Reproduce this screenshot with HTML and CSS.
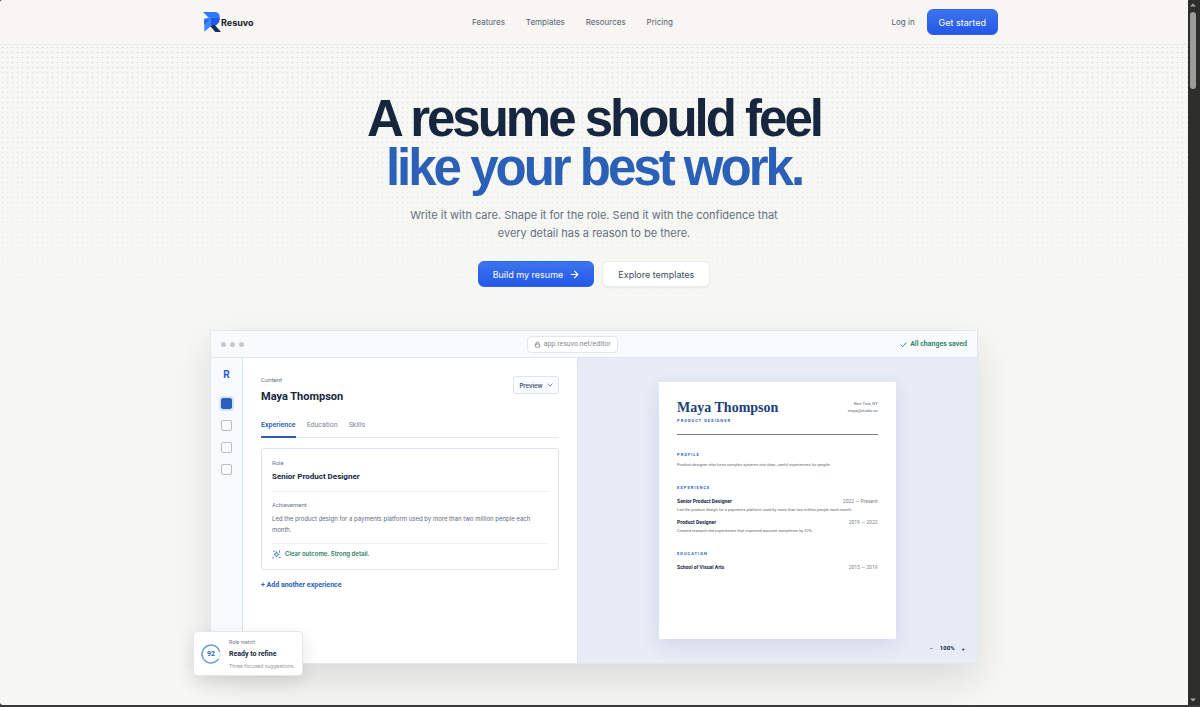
FILE: index.html
```html
<!DOCTYPE html>
<html lang="en">
<head>
    <meta charset="UTF-8">
    <meta name="viewport" content="width=device-width, initial-scale=1.0">
    <title>Resuvo</title>
    <link rel="stylesheet" href="styles.css">
</head>
<body>
    <div class="window">
        <div class="page">
            <header class="site-header">
                <div class="header-inner">
                    <a class="brand" href="#">
                        <svg class="brand-mark" viewBox="0 0 54 60" aria-hidden="true">
                            <path fill="#2f7bf6" d="M0 0h35c10 0 15 6 15 14v6H20z"/>
                            <path fill="#2457e8" d="M20 18h30v4c0 9-5 15-14 19l-14 3z"/>
                            <path fill="#3f86fa" d="M4 20l16-4 4 4v22L4 59z"/>
                            <path fill="#2563eb" d="M4 22l14 2L4 38z"/>
                            <path fill="#14305f" d="M22 43l13-5 19 22H37z"/>
                        </svg>
                        <span>Resuvo</span>
                    </a>
                    <nav class="nav">
                        <a href="#">Features</a>
                        <a href="#">Templates</a>
                        <a href="#">Resources</a>
                        <a href="#">Pricing</a>
                    </nav>
                    <div class="header-actions">
                        <a href="#">Log in</a>
                        <button class="btn btn-primary btn-small">Get started</button>
                    </div>
                </div>
            </header>

            <main class="hero">
                <h1>A resume should feel <span>like your best work.</span></h1>
                <p class="lead">Write it with care. Shape it for the role. Send it with the confidence that every detail has a reason to be there.</p>
                <div class="hero-actions">
                    <button class="btn btn-primary">Build my resume
                        <svg class="icon" viewBox="0 0 16 16" aria-hidden="true"><path d="M2 8h12M8 2l6 6-6 6"/></svg>
                    </button>
                    <button class="btn btn-light">Explore templates</button>
                </div>

                <div class="demo">
                    <div class="demo-bar">
                        <div class="dots"><i></i><i></i><i></i></div>
                        <div class="address">
                            <svg class="icon" viewBox="0 0 16 16" aria-hidden="true"><rect x="3" y="7" width="10" height="7" rx="1"/><path d="M5 7V5a3 3 0 0 1 6 0v2"/></svg>
                            app.resuvo.net/editor
                        </div>
                        <div class="saved">
                            <svg class="icon" viewBox="0 0 16 16" aria-hidden="true"><path d="M2 9l4 4 8-9"/></svg>
                            All changes saved
                        </div>
                    </div>

                    <div class="demo-body">
                        <aside class="rail">
                            <b>R</b>
                            <i class="active"></i>
                            <i></i>
                            <i></i>
                            <i></i>
                        </aside>

                        <section class="editor">
                            <div class="editor-head">
                                <div>
                                    <div class="label">Content</div>
                                    <h2>Maya Thompson</h2>
                                </div>
                                <button class="preview-btn">Preview
                                    <svg class="icon" viewBox="0 0 16 16" aria-hidden="true"><path d="M2 5l6 6 6-6"/></svg>
                                </button>
                            </div>
                            <div class="tabs">
                                <button class="tab active">Experience</button>
                                <button class="tab">Education</button>
                                <button class="tab">Skills</button>
                            </div>
                            <div class="card">
                                <div class="field">
                                    <div class="label">Role</div>
                                    <h3>Senior Product Designer</h3>
                                </div>
                                <div class="field">
                                    <div class="label">Achievement</div>
                                    <p>Led the product design for a payments platform used by more than two million people each month.</p>
                                </div>
                                <div class="hint">
                                    <svg class="icon" viewBox="0 0 24 24" aria-hidden="true"><path d="M12 5l2 5 5 2-5 2-2 5-2-5-5-2 5-2zM4 3h3M20 2v4M19 20h3M3 19v3"/></svg>
                                    Clear outcome. Strong detail.
                                </div>
                            </div>
                            <button class="add">+ Add another experience</button>
                        </section>

                        <section class="preview">
                            <article class="paper">
                                <div class="paper-head">
                                    <div>
                                        <h2>Maya Thompson</h2>
                                        <h4>PRODUCT DESIGNER</h4>
                                    </div>
                                    <p>New York, NY<br>maya@studio.co</p>
                                </div>
                                <h4>PROFILE</h4>
                                <p>Product designer who turns complex systems into clear, useful experiences for people.</p>
                                <h4>EXPERIENCE</h4>
                                <div class="job"><b>Senior Product Designer</b><span>2022 — Present</span></div>
                                <p>Led the product design for a payments platform used by more than two million people each month.</p>
                                <div class="job"><b>Product Designer</b><span>2019 — 2022</span></div>
                                <p>Created research-led experiences that improved account completion by 32%.</p>
                                <h4>EDUCATION</h4>
                                <div class="job"><b>School of Visual Arts</b><span>2015 — 2019</span></div>
                            </article>
                            <div class="zoom">
                                <button aria-label="Zoom out">−</button>
                                <b>100%</b>
                                <button aria-label="Zoom in">+</button>
                            </div>
                        </section>
                    </div>

                    <div class="match">
                        <div class="score">
                            <svg viewBox="0 0 40 40" aria-hidden="true"><circle cx="20" cy="20" r="18" stroke="#dce8f8"/><circle cx="20" cy="20" r="18" stroke="#6f9fe6" pathLength="100" stroke-dasharray="86 14" transform="rotate(35 20 20)"/></svg>
                            <b>92</b>
                        </div>
                        <div>
                            <div class="match-label">Role match</div>
                            <h3>Ready to refine</h3>
                            <div class="match-note">Three focused suggestions.</div>
                        </div>
                    </div>
                </div>
            </main>
        </div>

        <div class="scrollbar" aria-hidden="true">
            <svg viewBox="0 0 8 8"><path d="M0 6l4-4 4 4z"/></svg>
            <div class="thumb"></div>
            <svg viewBox="0 0 8 8"><path d="M0 2l4 4 4-4z"/></svg>
        </div>
    </div>
</body>
</html>
```
FILE: styles.css
```css
* {
    box-sizing: border-box;
}
body {
    margin: 0;
    background: #393939;
    color: #16263f;
    font-family: Inter, "Liberation Sans", sans-serif;
}
h1, h2, h3, h4, p {
    margin: 0;
}
a {
    color: inherit;
    text-decoration: none;
}
button {
    font-family: inherit;
    color: inherit;
    background: none;
    border: none;
    padding: 0;
    cursor: pointer;
}
.icon {
    width: 9px;
    height: 9px;
    fill: none;
    stroke: currentColor;
    stroke-width: 2;
    stroke-linecap: round;
    stroke-linejoin: round;
    flex: none;
}
.window {
    display: grid;
    grid-template-columns: minmax(0, 1fr) 12px;
    min-height: 100vh;
    padding-bottom: 3px;
}
.page {
    background: #f7f7f4;
    border-radius: 3px 0 0 3px;
    overflow: hidden;
}

/* header */
.site-header {
    background: #f7f6f3;
    border-bottom: 1px solid #ececea;
}
.header-inner {
    max-width: 808px;
    height: 44px;
    margin: 0 auto;
    display: flex;
    align-items: center;
    justify-content: space-between;
}
.brand {
    display: flex;
    align-items: center;
    padding-left: 13px;
    font-size: 9px;
    font-weight: 700;
    color: #17191f;
}
.brand-mark {
    width: 18px;
    height: 20px;
}
.nav {
    display: flex;
    gap: 21px;
    font-size: 8px;
    color: #565f70;
}
.header-actions {
    display: flex;
    align-items: center;
    gap: 12px;
    font-size: 8px;
    color: #565f70;
}
.btn {
    display: flex;
    align-items: center;
    gap: 7px;
    height: 26px;
    padding: 0 14px;
    border-radius: 6px;
    font-size: 9px;
}
.btn-primary {
    color: #fff;
    background: linear-gradient(#3b74ee, #2458e8);
    border: 1px solid #2f66e4;
}
.btn-small {
    padding: 0 11px;
}
.btn-light {
    color: #424b59;
    background: #fff;
    padding: 0 15px;
    border: 1px solid #ececec;
    box-shadow: 0 1px 2px rgba(0,0,0,0.06);
}

/* hero */
.hero {
    position: relative;
    padding: 49px 20px 41px;
    display: flex;
    flex-direction: column;
    align-items: center;
    text-align: center;
}
.hero::before {
    content: "";
    position: absolute;
    inset: 0 0 auto 0;
    height: 280px;
    background: radial-gradient(circle, #dcdddb 20%, transparent 30%) 0 0 / 5px 5px;
    mask-image: linear-gradient(#000, transparent);
}
.hero > * {
    position: relative;
}
h1 {
    font-family: "Liberation Sans", Arial, sans-serif;
    font-size: 51px;
    line-height: 49px;
    font-weight: 700;
    letter-spacing: -3px;
}
h1 span {
    display: block;
    color: #2a60b8;
}
.lead {
    max-width: 380px;
    margin-top: 14px;
    font-size: 11px;
    line-height: 18px;
    color: #64707f;
}
.hero-actions {
    display: flex;
    gap: 8px;
    margin: 19px 0 43px;
}

/* editor demo */
.demo {
    width: 100%;
    max-width: 768px;
    font-family: Roboto, "Liberation Sans", sans-serif;
    text-align: left;
    border: 1px solid #e2e8ee;
    box-shadow: 0 16px 36px rgba(30,40,50,0.13);
}
.demo-bar {
    display: flex;
    justify-content: space-between;
    align-items: center;
    height: 27px;
    padding: 0 10px;
    background: #f7fbfe;
    border-bottom: 1px solid #dfe6ed;
    font-size: 7px;
}
.dots {
    display: flex;
    gap: 4px;
}
.dots i {
    width: 5px;
    height: 5px;
    border-radius: 50%;
    background: #c6c9cd;
}
.address {
    display: flex;
    align-items: center;
    gap: 3px;
    height: 17px;
    padding: 0 6px;
    color: #858a92;
    background: #fff;
    border: 1px solid #e1e7ec;
    border-radius: 4px;
}
.address .icon, .saved .icon {
    width: 7px;
    height: 7px;
}
.saved {
    display: flex;
    align-items: center;
    gap: 3px;
    color: #2a805e;
    font-weight: 600;
}
.demo-body {
    display: grid;
    grid-template-columns: 32px 5fr 6fr;
    min-height: 305px;
}
.rail {
    display: flex;
    flex-direction: column;
    align-items: center;
    gap: 11px;
    padding-top: 11px;
    background: #f8fafe;
    border-right: 1px solid #dce4ec;
}
.rail b {
    margin-bottom: 6px;
    font-size: 10px;
    line-height: 12px;
    color: #2a5fba;
}
.rail i {
    width: 11px;
    height: 11px;
    border: 1px solid #b6bec8;
    border-radius: 2px;
}
.rail .active {
    background: #2a5fba;
    border-color: #2a5fba;
    box-shadow: 0 0 0 2px #d5e4f9;
}
.editor {
    padding: 18px;
    background: #fff;
}
.editor-head {
    display: flex;
    justify-content: space-between;
    align-items: flex-start;
}
.label {
    font-size: 6px;
    line-height: 8px;
    color: #66758a;
}
.editor h2 {
    margin-top: 5px;
    font-size: 11px;
    line-height: 16px;
    font-weight: 700;
}
.preview-btn {
    display: flex;
    align-items: center;
    gap: 4px;
    height: 18px;
    padding: 0 5px;
    font-family: Inter, sans-serif;
    font-size: 6px;
    font-weight: 600;
    color: #47566e;
    background: #fafcff;
    border: 1px solid #dce5ee;
    border-radius: 3px;
}
.preview-btn .icon {
    width: 6px;
    height: 6px;
}
.tabs {
    display: flex;
    gap: 11px;
    margin-top: 13px;
    border-bottom: 1px solid #e4e8ed;
}
.tab {
    height: 20px;
    padding-bottom: 5px;
    margin-bottom: -1px;
    font-size: 7px;
    line-height: 10px;
    color: #7d8592;
    border-bottom: 2px solid transparent;
}
.tab.active {
    color: #2a5fba;
    font-weight: 600;
    border-color: #2a5fba;
}
.card {
    margin-top: 10px;
    padding: 10px;
    border: 1px solid #dde5ec;
    border-radius: 3px;
}
.field {
    padding-bottom: 8px;
    margin-bottom: 9px;
    border-bottom: 1px solid #edf0f3;
}
.field h3 {
    margin-top: 4px;
    font-size: 8px;
    line-height: 12px;
    font-weight: 700;
}
.field p {
    margin-top: 4px;
    font-family: Inter, sans-serif;
    font-size: 6px;
    line-height: 11px;
    color: #5d697a;
}
.hint {
    display: flex;
    align-items: center;
    gap: 4px;
    margin-top: -4px;
    font-family: Inter, sans-serif;
    font-size: 6px;
    line-height: 10px;
    font-weight: 600;
    color: #2a805e;
}
.hint .icon {
    color: #2a5fba;
}
.add {
    display: block;
    margin-top: 10px;
    font-size: 7px;
    line-height: 10px;
    font-weight: 700;
    color: #2a5fba;
}

/* resume preview */
.preview {
    display: flex;
    flex-direction: column;
    align-items: center;
    padding: 24px 12px 10px;
    background: #e7ecf6;
    border-left: 1px solid #dde4ef;
}
.paper {
    width: 63%;
    min-height: 257px;
    padding: 18px;
    background: #fff;
    box-shadow: 0 6px 18px rgba(50,75,120,0.12);
}
.paper-head {
    display: flex;
    justify-content: space-between;
    padding-bottom: 11px;
    border-bottom: 1px solid #7a8089;
}
.paper h2 {
    font-family: "Liberation Serif", serif;
    font-size: 14px;
    line-height: 16px;
    color: #1b3f78;
}
.paper h4 {
    margin: 17px 0 4px;
    font-size: 4px;
    line-height: 5px;
    letter-spacing: 1px;
    color: #2a5fba;
}
.paper-head h4 {
    margin: 2px 0 0;
}
.paper p {
    font-size: 4px;
    line-height: 7px;
    color: #626870;
}
.paper-head p {
    text-align: right;
}
.job {
    display: flex;
    justify-content: space-between;
    margin-top: 5px;
    font-size: 5px;
    line-height: 9px;
}
h4 + .job {
    margin-top: 7px;
}
.job span {
    color: #7c828a;
}
.zoom {
    display: flex;
    align-self: flex-end;
    gap: 7px;
    margin-top: 5px;
    font-size: 6px;
    line-height: 8px;
}
.zoom button {
    font-size: 6px;
}

/* floating score card */
.match {
    position: absolute;
    left: -18px;
    bottom: -13px;
    display: flex;
    align-items: center;
    gap: 8px;
    height: 45px;
    padding: 0 7px;
    background: #fff;
    border: 1px solid #e3e8ed;
    border-radius: 4px;
    box-shadow: 0 6px 16px rgba(30,40,60,0.12);
}
.score {
    display: grid;
    place-items: center;
    color: #2a5fba;
    font-size: 7px;
}
.score > * {
    grid-area: 1 / 1;
}
.score svg {
    width: 20px;
    height: 20px;
    fill: none;
    stroke-width: 3;
}
.match-label, .match-note {
    font-family: Inter, sans-serif;
    font-size: 5px;
    line-height: 8px;
    color: #6b7480;
}
.match-note {
    color: #9399a0;
}
.match h3 {
    margin: 3px 0;
    font-size: 7px;
    line-height: 10px;
}

/* scrollbar */
.scrollbar {
    display: flex;
    flex-direction: column;
    align-items: center;
    gap: 4px;
    padding: 2px 4px 2px 2px;
    background: #2d2d2b;
}
.scrollbar svg {
    width: 6px;
    height: 6px;
    fill: #a6a6a4;
}
.scrollbar svg:last-child {
    margin-top: auto;
}
.thumb {
    width: 6px;
    height: 77px;
    border-radius: 3px;
    background: #9b9b99;
}
```
